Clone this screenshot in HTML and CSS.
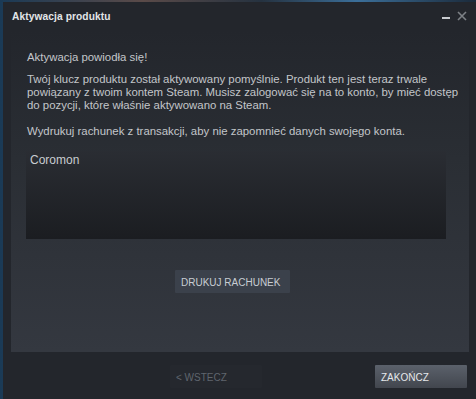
FILE: index.html
```html
<!DOCTYPE html>
<html lang="pl">
<head>
    <meta charset="UTF-8">
    <title>Aktywacja produktu</title>
    <link rel="stylesheet" href="styles.css">
</head>
<body>
    <div class="dialog">
        <div class="titlebar">
            <span class="title">Aktywacja produktu</span>
            <div class="controls">
                <span class="min"></span>
                <svg class="close" width="10" height="10" viewBox="0 0 10 10">
                    <path d="M1 1 L9 9 M9 1 L1 9" stroke="#7d8186" stroke-width="1.6"/>
                </svg>
            </div>
        </div>

        <div class="panel">
            <p class="headline">Aktywacja powiodła się!</p>
            <p>Twój klucz produktu został aktywowany pomyślnie. Produkt ten jest teraz trwale<br>
               powiązany z twoim kontem Steam. Musisz zalogować się na to konto, by mieć dostęp<br>
               do pozycji, które właśnie aktywowano na Steam.</p>
            <p>Wydrukuj rachunek z transakcji, aby nie zapomnieć danych swojego konta.</p>

            <div class="receipt">Coromon</div>

            <div class="print-row">
                <button class="btn">DRUKUJ RACHUNEK</button>
            </div>
        </div>

        <!-- Nawigacja -->
        <div class="footer">
            <button class="btn disabled">&lt; WSTECZ</button>
            <button class="btn primary">ZAKOŃCZ</button>
        </div>
    </div>
</body>
</html>
```

FILE: styles.css
```css
body {
    margin: 0;
    width: 476px;
    height: 399px;
    overflow: hidden;
    background: linear-gradient(90deg, #1a3a56 0%, #5a4a48 30%, #253240 55%, #3b6f9a 75%, #1b2a3a 100%);
    font-family: 'Liberation Sans', Arial, sans-serif;
    display: flex;
    padding: 2px 0 0 3px;
    box-sizing: border-box;
}

.dialog {
    flex: 1;
    background-color: #23262c;
    display: flex;
    flex-direction: column;
    color: #c3c6ca;
    font-size: 11.4px;
}

.titlebar {
    height: 28px;
    display: flex;
    align-items: center;
    justify-content: space-between;
    padding: 0 9px 0 9px;
}

.title {
    color: #e2e5e8;
    font-size: 10.2px;
    font-weight: bold;
    letter-spacing: 0.1px;
    margin-top: 1px;
}

.controls {
    display: flex;
    align-items: flex-end;
    gap: 7px;
}

.min {
    display: block;
    width: 8px;
    height: 2px;
    background-color: #c9ccd0;
    margin-bottom: 2px;
}

.close {
    display: block;
}

.panel {
    margin: 0 7px 0 8px;
    height: 322px;
    padding: 21px 4px 0 16px;
    box-sizing: border-box;
    background: linear-gradient(180deg, #23262c 0%, #2a2e34 40%, #343840 100%);
}

.panel p {
    margin: 0 0 13px 0;
    line-height: 13px;
    white-space: nowrap;
}

.panel .headline {
    margin-bottom: 9px;
}

.receipt {
    margin: 8px 0 0 -1px;
    width: 420px;
    height: 88px;
    box-sizing: border-box;
    padding: 2px 4px;
    background: linear-gradient(180deg, #2a2d33 0%, #1b1d21 100%);
    color: #c8ccd0;
    font-size: 12px;
}

.print-row {
    display: flex;
    padding-left: 148px;
    margin-top: 31px;
}

.btn {
    font-family: 'Liberation Sans', Arial, sans-serif;
    font-size: 10px;
    height: 23px;
    border: none;
    border-radius: 1px;
    text-align: left;
    white-space: nowrap;
    padding: 1px 6px 0 6px;
    color: #c8cdd3;
    background-color: #3b414b;
}

.print-row .btn {
    width: 115px;
}

.footer {
    display: flex;
    justify-content: space-between;
    padding: 13px 9px 0 167px;
}

.footer .btn {
    width: 92px;
}

.btn.disabled {
    background-color: #25282e;
    color: #5f656d;
}

.btn.primary {
    background: linear-gradient(180deg, #5b616b 0%, #42464e 100%);
    color: #e6e8eb;
}
```
